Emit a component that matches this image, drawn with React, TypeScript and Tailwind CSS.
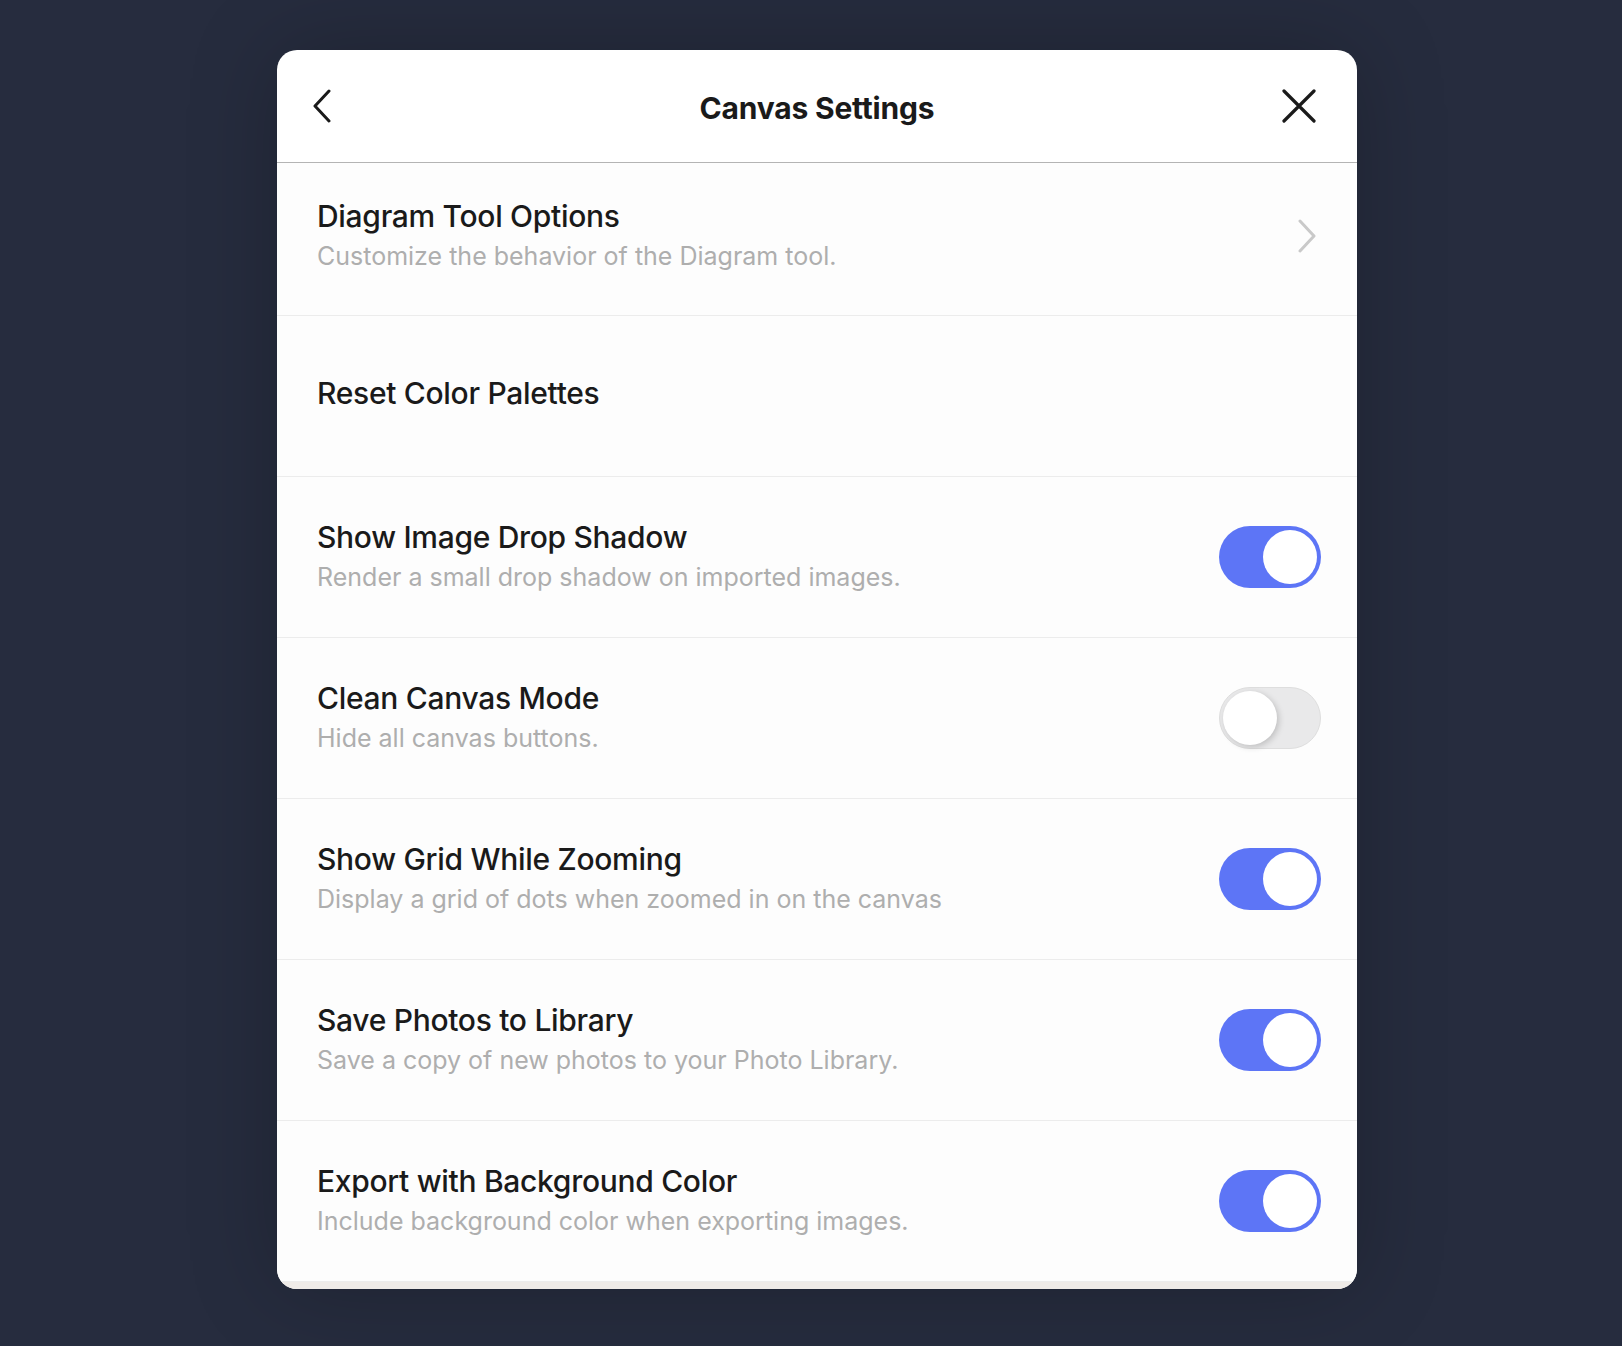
import { useState } from "react";

type Row = {
  title: string;
  subtitle: string;
  on: boolean;
};

const rows: Row[] = [
  { title: "Show Image Drop Shadow", subtitle: "Render a small drop shadow on imported images.", on: true },
  { title: "Clean Canvas Mode", subtitle: "Hide all canvas buttons.", on: false },
  { title: "Show Grid While Zooming", subtitle: "Display a grid of dots when zoomed in on the canvas", on: true },
  { title: "Save Photos to Library", subtitle: "Save a copy of new photos to your Photo Library.", on: true },
  { title: "Export with Background Color", subtitle: "Include background color when exporting images.", on: true },
];

const Toggle: React.FC<{ on: boolean; onChange: () => void }> = ({ on, onChange }) => {
  return (
    <button
      onClick={onChange}
      className={
        on
          ? "flex h-[62px] w-[102px] shrink-0 items-center justify-end rounded-full bg-[#5d75f6] px-[4px]"
          : "flex h-[62px] w-[102px] shrink-0 items-center justify-start rounded-full border border-[#dedede] bg-[#e9e9ea] px-[3px]"
      }
    >
      <span
        className={
          on
            ? "h-[54px] w-[54px] rounded-full bg-white"
            : "h-[54px] w-[54px] rounded-full bg-white shadow-[2px_2px_6px_rgba(0,0,0,0.18)]"
        }
      />
    </button>
  );
};

export default function App() {
  const [state, setState] = useState(rows.map((r) => r.on));

  return (
    <div
      className="min-h-[1346px] bg-[#262c3e] pl-[277px] pt-[50px]"
      style={{ fontFamily: "Inter, Roboto, 'Liberation Sans', sans-serif" }}
    >
      <div className="w-[1080px] overflow-hidden rounded-[20px] bg-white shadow-[0_0_90px_rgba(0,0,0,0.22)]">
        <div className="grid h-[113px] grid-cols-[1fr_auto_1fr] items-center border-b border-[#b4b4b4] px-[35px]">
          <svg width="20" height="34" viewBox="0 0 20 34" fill="none" className="-mt-[1px]">
            <path d="M17 2 L3 17 L17 32" stroke="#1a1a1a" strokeWidth="3" strokeLinecap="round" strokeLinejoin="round" />
          </svg>
          <h1 className="mt-[4px] text-[30px] font-bold tracking-[-0.2px] text-[#1a1a1a]">Canvas Settings</h1>
          <svg width="34" height="34" viewBox="0 0 34 34" fill="none" className="-mt-[1px] mr-[6px] justify-self-end">
            <path d="M2 2 L32 32 M32 2 L2 32" stroke="#1a1a1a" strokeWidth="3.2" strokeLinecap="round" />
          </svg>
        </div>

        <div className="flex h-[153px] items-center justify-between border-b border-[#ececec] bg-[#fdfdfd] pl-[40px] pr-[40px]">
          <div className="-mt-[6px] flex flex-col">
            <span className="text-[30px] font-medium leading-[40px] tracking-[-0.3px] text-[#1a1a1a]">Diagram Tool Options</span>
            <span className="text-[25px] leading-[40px] text-[#aeaeae]">Customize the behavior of the Diagram tool.</span>
          </div>
          <svg width="20" height="34" viewBox="0 0 20 34" fill="none" className="-mt-[6px]">
            <path d="M3 2 L17 17 L3 32" stroke="#c9c9c9" strokeWidth="3" strokeLinecap="round" strokeLinejoin="round" />
          </svg>
        </div>

        <div className="flex h-[161px] items-center border-b border-[#ececec] bg-[#fdfdfd] pl-[40px]">
          <span className="-mt-[5px] text-[30px] font-medium tracking-[-0.3px] text-[#1a1a1a]">Reset Color Palettes</span>
        </div>

        {rows.map((row, i) => (
          <div
            key={row.title}
            className="flex h-[161px] items-center justify-between border-b border-[#ececec] bg-[#fdfdfd] pl-[40px] pr-[36px] last:h-[162px] last:border-b-0"
          >
            <div className="flex flex-col">
              <span className="text-[30px] font-medium leading-[40px] tracking-[-0.3px] text-[#1a1a1a]">{row.title}</span>
              <span className="text-[25px] leading-[40px] text-[#aeaeae]">{row.subtitle}</span>
            </div>
            <Toggle
              on={state[i]}
              onChange={() => setState((s) => s.map((v, j) => (j === i ? !v : v)))}
            />
          </div>
        ))}

        <div className="h-[7px] bg-[#efebe8]" />
      </div>
    </div>
  );
}
